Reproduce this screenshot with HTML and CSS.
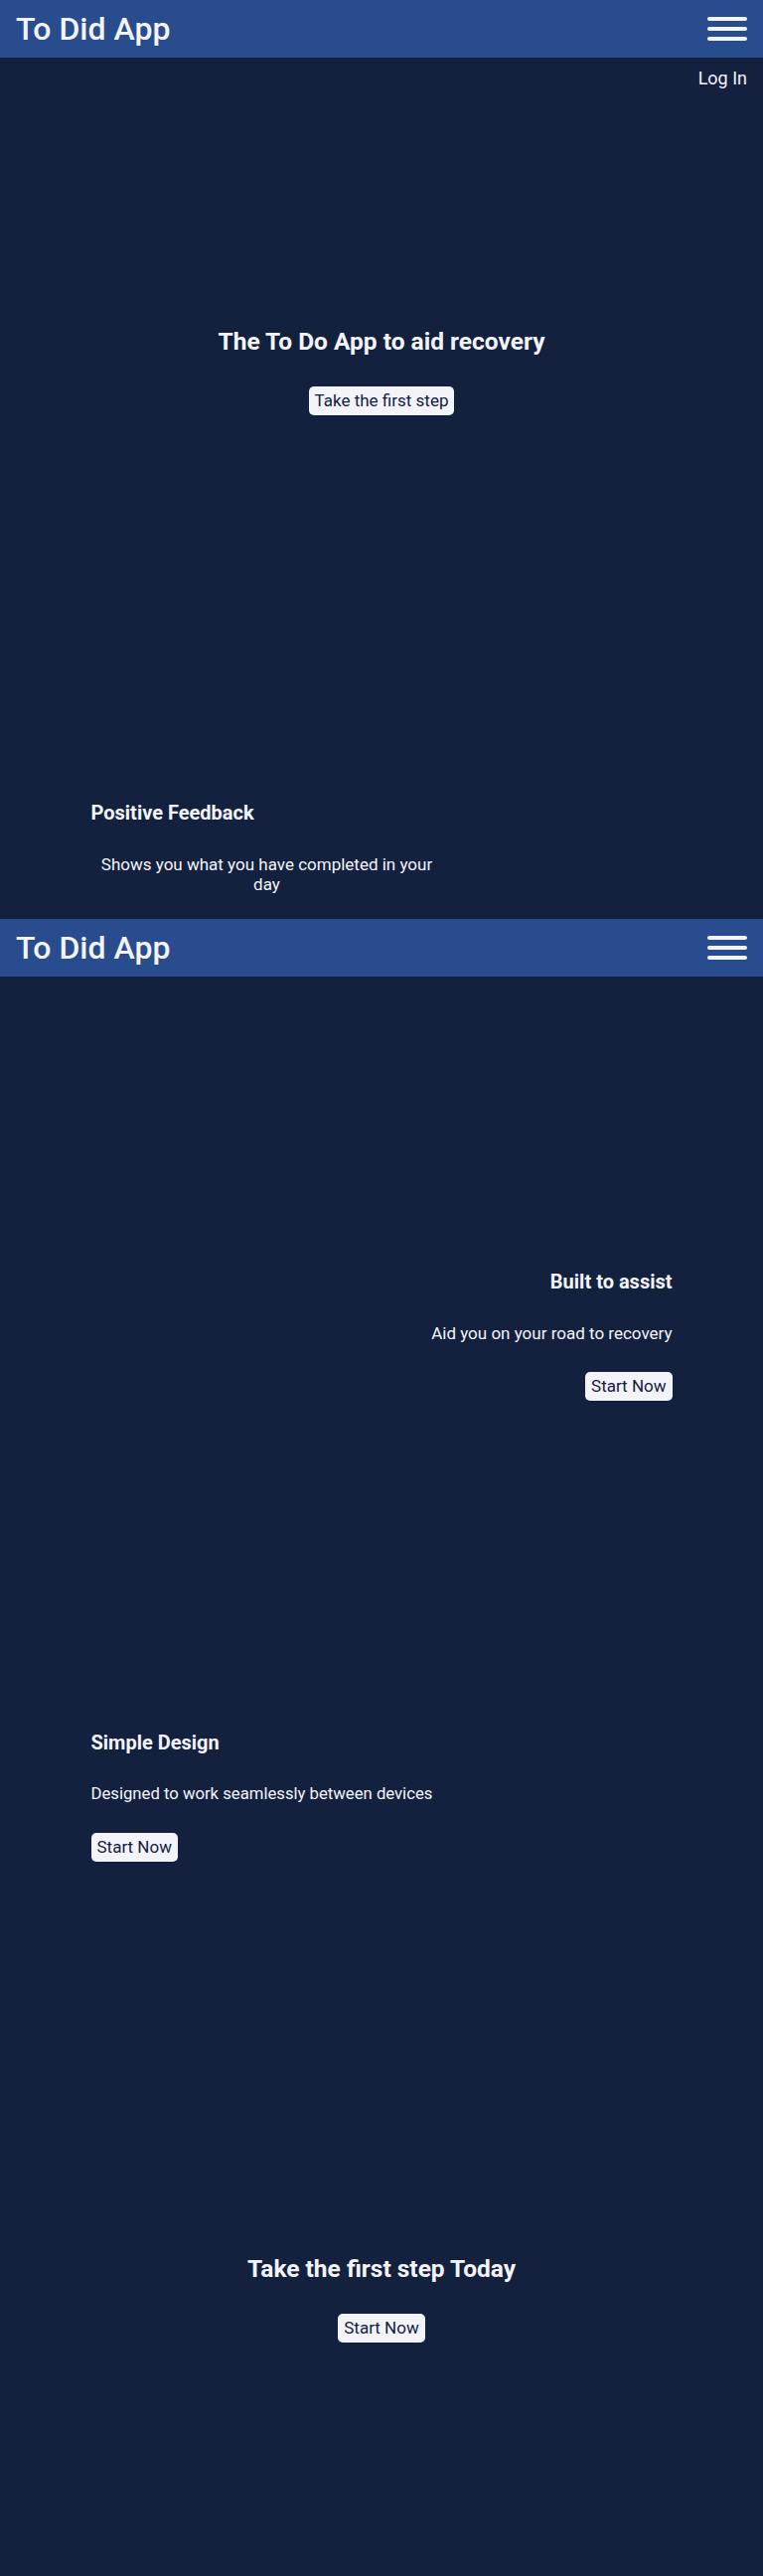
FILE: index.html
```html
<!DOCTYPE html>
<html lang="en">
<head>
<meta charset="utf-8">
<title>To Did App</title>
<link rel="stylesheet" href="styles.css">
</head>
<body>
<header class="nav">
  <span class="brand">To Did App</span>
  <button class="burger" aria-label="Menu"><span></span><span></span><span></span></button>
</header>
<div class="login-row"><a class="login" href="#">Log In</a></div>

<section class="hero hero-top">
  <h1 class="hero-title">The To Do App to aid recovery</h1>
  <a class="btn" href="#">Take the first step</a>
</section>

<section class="feature feature-first">
  <h2 class="feature-title">Positive Feedback</h2>
  <p class="feature-text centered">Shows you what you have completed in your day</p>
</section>

<header class="nav">
  <span class="brand">To Did App</span>
  <button class="burger" aria-label="Menu"><span></span><span></span><span></span></button>
</header>

<section class="feature feature-right">
  <h2 class="feature-title">Built to assist</h2>
  <p class="feature-text">Aid you on your road to recovery</p>
  <a class="btn" href="#">Start Now</a>
</section>

<section class="feature feature-left">
  <h2 class="feature-title">Simple Design</h2>
  <p class="feature-text">Designed to work seamlessly between devices</p>
  <a class="btn" href="#">Start Now</a>
</section>

<section class="hero hero-bottom">
  <h1 class="hero-title">Take the first step Today</h1>
  <a class="btn" href="#">Start Now</a>
</section>
</body>
</html>
```

FILE: styles.css
```css
* { box-sizing: border-box; }

html, body {
  margin: 0;
  padding: 0;
}

body {
  background: #13213f;
  color: #f3f4f9;
  font-family: Roboto, "Noto Sans", sans-serif;
  height: 2593px;
  overflow: hidden;
}

.nav {
  height: 58px;
  background: #294c8f;
  display: flex;
  align-items: center;
  justify-content: space-between;
  padding: 0 16px;
}

.brand {
  font-size: 32px;
  font-weight: 500;
  color: #f3f4f9;
  line-height: 40px;
}

.burger {
  width: 40px;
  height: 24px;
  padding: 0;
  border: 0;
  background: transparent;
  display: flex;
  flex-direction: column;
  justify-content: space-between;
  cursor: pointer;
}

.burger span {
  display: block;
  height: 4px;
  border-radius: 2px;
  background: #f3f4f9;
}

.login-row {
  height: 40px;
  padding: 10px 16px 0;
  display: flex;
  justify-content: flex-end;
}

.login {
  color: #f3f4f9;
  text-decoration: none;
  font-size: 18px;
  line-height: 22px;
}

.hero {
  display: flex;
  flex-direction: column;
  align-items: center;
  text-align: center;
}

.hero-top {
  padding-top: 230px;
  padding-bottom: 388px;
}

.hero-bottom {
  padding-top: 394px;
}

.hero-title {
  margin: 0 0 29px;
  font-size: 24.5px;
  line-height: 32px;
  font-weight: 700;
}

.btn {
  display: inline-block;
  background: #f3f4f9;
  color: #13213f;
  text-decoration: none;
  font-size: 17px;
  line-height: 21px;
  padding: 4px 6px;
  border-radius: 5px;
}

.feature {
  width: 585px;
  margin: 0 auto;
  display: flex;
  flex-direction: column;
  align-items: stretch;
}

.feature-title {
  margin: 0 0 30px;
  font-size: 20px;
  line-height: 24px;
  font-weight: 700;
}

.feature-text {
  margin: 0 0 29px;
  font-size: 17px;
  line-height: 20px;
}

.feature-first {
  padding-bottom: 25px;
}

.feature-first .feature-title {
  text-align: left;
}

.feature-first .feature-text {
  margin: 0;
}

.centered {
  width: 354px;
  text-align: center;
}

.feature-right {
  padding-top: 295px;
  align-items: flex-end;
  text-align: right;
}

.feature-left {
  padding-top: 332px;
  align-items: flex-start;
}

.feature-left .feature-text {
  font-size: 16.7px;
}
```
